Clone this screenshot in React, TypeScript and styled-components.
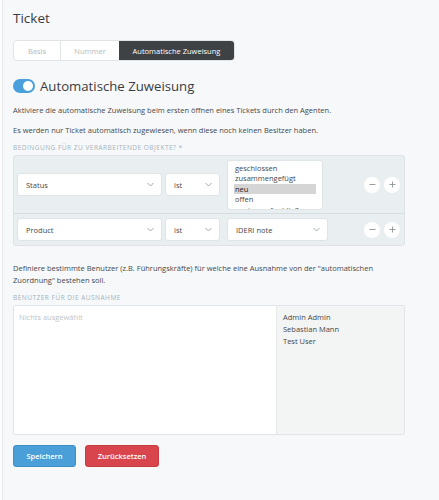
import React from "react"
import styled, { createGlobalStyle } from "styled-components"

const GlobalStyle = createGlobalStyle`
  html, body {
    margin: 0;
    padding: 0;
    background: #fdfdfd;
  }
  body {
    font-family: "Open Sans", "Noto Sans", sans-serif;
    color: #4a4d50;
  }
`

const statusOptions = [
  { label: "geschlossen", selected: false },
  { label: "zusammengefügt", selected: false },
  { label: "neu", selected: true },
  { label: "offen", selected: false },
  { label: "warten auf schließen", selected: false },
]

const users = ["Admin Admin", "Sebastian Mann", "Test User"]

function Chevron() {
  return (
    <svg width="7" height="5" viewBox="0 0 7 5">
      <path d="M0.5 1 L3.5 4 L6.5 1" fill="none" stroke="#9aa0a4" strokeWidth="0.9" />
    </svg>
  )
}

function Select({ value, width }: { value: string; width: number }) {
  return (
    <StyledSelect $width={width}>
      <span>{value}</span>
      <Chevron />
    </StyledSelect>
  )
}

function RoundButtons() {
  return (
    <StyledButtons>
      <StyledCircle>
        <svg width="7" height="7" viewBox="0 0 7 7">
          <path d="M0.5 3.5 H6.5" stroke="#8d9397" strokeWidth="0.9" />
        </svg>
      </StyledCircle>
      <StyledCircle>
        <svg width="7" height="7" viewBox="0 0 7 7">
          <path d="M0.5 3.5 H6.5 M3.5 0.5 V6.5" stroke="#8d9397" strokeWidth="0.9" />
        </svg>
      </StyledCircle>
    </StyledButtons>
  )
}

export default function App() {
  return (
    <>
      <GlobalStyle />
      <StyledPage>
        <StyledTitle>Ticket</StyledTitle>
        <StyledTabs>
          <StyledTab $width={46}>Basis</StyledTab>
          <StyledTab $width={58}>Nummer</StyledTab>
          <StyledTab $width={115} $active>
            Automatische Zuweisung
          </StyledTab>
        </StyledTabs>

        <StyledHeading>
          <StyledToggle>
            <StyledKnob />
          </StyledToggle>
          Automatische Zuweisung
        </StyledHeading>

        <StyledText>
          Aktiviere die automatische Zuweisung beim ersten öffnen eines Tickets durch den Agenten.
        </StyledText>
        <StyledText>
          Es werden nur Ticket automatisch zugewiesen, wenn diese noch keinen Besitzer haben.
        </StyledText>

        <StyledLabel $top={8}>Bedingung für zu verarbeitende Objekte? *</StyledLabel>
        <StyledConditions>
          <StyledRow $height={57}>
            <Select value="Status" width={145} />
            <Select value="ist" width={55} />
            <StyledList>
              {statusOptions.map(o => (
                <StyledOption key={o.label} $selected={o.selected}>
                  {o.label}
                </StyledOption>
              ))}
            </StyledList>
            <RoundButtons />
          </StyledRow>
          <StyledRow $height={31}>
            <Select value="Product" width={145} />
            <Select value="ist" width={55} />
            <StyledValueSelect>
              <Select value="IDERI note" width={101} />
            </StyledValueSelect>
            <RoundButtons />
          </StyledRow>
        </StyledConditions>

        <StyledDescription>
          Definiere bestimmte Benutzer (z.B. Führungskräfte) für welche eine Ausnahme von der
          "automatischen Zuordnung" bestehen soll.
        </StyledDescription>

        <StyledLabel $top={7}>Benutzer für die Ausnahme</StyledLabel>
        <StyledUserBox>
          <StyledPicked>Nichts ausgewählt</StyledPicked>
          <StyledAvailable>
            {users.map(u => (
              <StyledUser key={u}>{u}</StyledUser>
            ))}
          </StyledAvailable>
        </StyledUserBox>

        <StyledActions>
          <StyledButton $color="#4a9fd8" $border="#3f8fc6" $width={63}>
            Speichern
          </StyledButton>
          <StyledButton $color="#d8454d" $border="#c63a42" $width={74}>
            Zurücksetzen
          </StyledButton>
        </StyledActions>
      </StyledPage>
    </>
  )
}

const StyledPage = styled.div`
  margin-left: 2px;
  min-height: 500px;
  box-sizing: border-box;
  border-left: 1px solid #e6e8ea;
  background: #f7f8fa;
  padding: 10px 34px 10px 10px;
  display: flex;
  flex-direction: column;
`

const StyledTitle = styled.h1`
  margin: 0;
  font-size: 13.5px;
  font-weight: 400;
  color: #3a3c3e;
  line-height: 17px;
`

const StyledTabs = styled.div`
  display: flex;
  margin-top: 13px;
  width: max-content;
  border: 1px solid #e1e4e7;
  border-radius: 4px;
  background: #fff;
`

const StyledTab = styled.div<{ $width: number; $active?: boolean }>`
  width: ${p => p.$width}px;
  height: 19px;
  display: flex;
  align-items: center;
  justify-content: center;
  font-size: 7.5px;
  color: ${p => (p.$active ? "#fff" : "#b4b9bd")};
  background: ${p => (p.$active ? "#3e4245" : "transparent")};
  border-left: ${p => (p.$active ? "none" : "1px solid #e1e4e7")};
  border-radius: ${p => (p.$active ? "0 3px 3px 0" : "0")};
  &:first-child {
    border-left: none;
  }
`

const StyledHeading = styled.h2`
  margin: 16px 0 0;
  display: flex;
  align-items: center;
  gap: 5px;
  font-size: 13.2px;
  font-weight: 400;
  color: #3a3c3e;
  line-height: 18px;
`

const StyledToggle = styled.span`
  width: 22px;
  height: 14px;
  border-radius: 7px;
  background: #4aa0da;
  display: flex;
  align-items: center;
  justify-content: flex-end;
  padding-right: 2px;
  box-sizing: border-box;
`

const StyledKnob = styled.span`
  width: 10px;
  height: 10px;
  border-radius: 50%;
  background: #fff;
`

const StyledText = styled.p`
  margin: 10px 0 0;
  font-size: 7.5px;
  line-height: 10px;
  color: #45484b;
`

const StyledLabel = styled.div<{ $top: number }>`
  margin-top: ${p => p.$top}px;
  font-size: 6.5px;
  letter-spacing: 0.5px;
  text-transform: uppercase;
  color: #a3b4bd;
  line-height: 9px;
`

const StyledConditions = styled.div`
  margin-top: 3px;
  background: #e9eef1;
  border: 1px solid #dce2e6;
  border-radius: 3px;
`

const StyledRow = styled.div<{ $height: number }>`
  height: ${p => p.$height}px;
  display: flex;
  align-items: center;
  gap: 3px;
  padding: 0 4px 0 3px;
  & + & {
    border-top: 1px solid #d5dde1;
  }
`

const StyledSelect = styled.div<{ $width: number }>`
  width: ${p => p.$width}px;
  height: 23px;
  box-sizing: border-box;
  background: #fff;
  border: 1px solid #dfe4e7;
  border-radius: 3px;
  display: flex;
  align-items: center;
  justify-content: space-between;
  padding: 0 7px 0 8px;
  font-size: 7.5px;
  color: #45484b;
`

const StyledList = styled.div`
  margin-left: 4px;
  width: 96px;
  height: 50px;
  box-sizing: border-box;
  background: #fff;
  border: 1px solid #dfe4e7;
  border-radius: 3px;
  padding: 2px 6px 0 6px;
  overflow: hidden;
`

const StyledOption = styled.div<{ $selected: boolean }>`
  font-size: 7.5px;
  line-height: 10.5px;
  padding-left: 1px;
  color: ${p => (p.$selected ? "#222" : "#45484b")};
  background: ${p => (p.$selected ? "#d5d5d5" : "transparent")};
  white-space: nowrap;
`

const StyledValueSelect = styled.div`
  margin-left: 4px;
`

const StyledButtons = styled.div`
  margin-left: auto;
  display: flex;
  gap: 4px;
`

const StyledCircle = styled.div`
  width: 16px;
  height: 16px;
  border-radius: 50%;
  background: #fff;
  display: flex;
  align-items: center;
  justify-content: center;
`

const StyledDescription = styled.p`
  margin: 16px 0 0;
  font-size: 7.5px;
  line-height: 12px;
  color: #45484b;
`

const StyledUserBox = styled.div`
  margin-top: 3px;
  height: 130px;
  display: flex;
  border: 1px solid #e2e5e8;
  border-radius: 2px;
  box-sizing: border-box;
`

const StyledPicked = styled.div`
  width: 263px;
  background: #fff;
  border-right: 1px solid #e8eaec;
  padding: 6px 5px;
  box-sizing: border-box;
  font-size: 7.5px;
  color: #c2c5c8;
`

const StyledAvailable = styled.div`
  flex: 1;
  background: #f3f4f4;
  padding: 5px 6px;
  display: flex;
  flex-direction: column;
`

const StyledUser = styled.div`
  font-size: 7.5px;
  line-height: 12px;
  color: #45484b;
`

const StyledActions = styled.div`
  display: flex;
  gap: 9px;
  margin-top: 10px;
`

const StyledButton = styled.button<{ $color: string; $border: string; $width: number }>`
  width: ${p => p.$width}px;
  height: 22px;
  background: ${p => p.$color};
  border: 1px solid ${p => p.$border};
  border-radius: 3px;
  color: #fff;
  font-family: inherit;
  font-size: 7.5px;
  font-weight: 600;
  padding: 0;
`
